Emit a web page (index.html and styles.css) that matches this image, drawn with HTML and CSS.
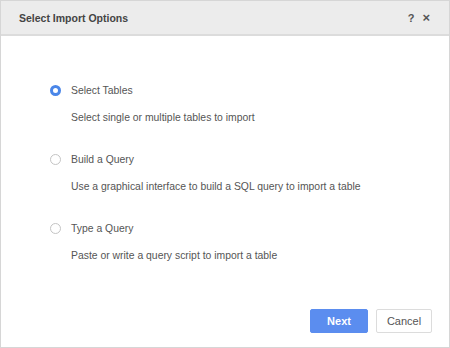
FILE: index.html
```html
<!DOCTYPE html>
<html lang="en">
<head>
    <meta charset="UTF-8">
    <title>Select Import Options</title>
    <link rel="stylesheet" href="styles.css">
</head>
<body>
    <div class="dialog">
        <div class="dialog-header">
            <span class="dialog-title">Select Import Options</span>
            <span class="header-tools">
                <span class="tool">?</span>
                <span class="tool close">&times;</span>
            </span>
        </div>

        <div class="dialog-body">
            <div class="option">
                <div class="option-row">
                    <span class="radio checked"></span>
                    <span class="option-label">Select Tables</span>
                </div>
                <div class="option-desc">Select single or multiple tables to import</div>
            </div>
            <div class="option">
                <div class="option-row">
                    <span class="radio"></span>
                    <span class="option-label">Build a Query</span>
                </div>
                <div class="option-desc">Use a graphical interface to build a SQL query to import a table</div>
            </div>
            <div class="option">
                <div class="option-row">
                    <span class="radio"></span>
                    <span class="option-label">Type a Query</span>
                </div>
                <div class="option-desc">Paste or write a query script to import a table</div>
            </div>
        </div>

        <div class="dialog-footer">
            <button class="btn primary">Next</button>
            <button class="btn">Cancel</button>
        </div>
    </div>
</body>
</html>
```

FILE: styles.css
```css
body {
    margin: 0;
    font-family: 'Liberation Sans', Arial, sans-serif;
    background: white;
}
.dialog {
    width: 450px;
    height: 348px;
    box-sizing: border-box;
    border: 1px solid #d6d6d6;
    display: flex;
    flex-direction: column;
}
.dialog-header {
    height: 33px;
    background: #ececec;
    border-bottom: 2px solid #dcdcdc;
    display: flex;
    align-items: center;
    justify-content: space-between;
    padding: 0 19px 0 18px;
}
.dialog-title {
    font-size: 10.5px;
    font-weight: bold;
    color: #444;
}
.header-tools {
    display: flex;
    gap: 8px;
}
.tool {
    font-size: 11px;
    font-weight: bold;
    color: #555;
}
.close {
    font-size: 13px;
    line-height: 11px;
}
.dialog-body {
    flex: 1;
    padding: 47px 0 0 49px;
}
.option {
    margin-bottom: 27px;
}
.option-row {
    display: flex;
    align-items: center;
    height: 14px;
}
.radio {
    width: 11px;
    height: 11px;
    box-sizing: border-box;
    border: 1px solid #c4c4c4;
    border-radius: 50%;
    margin-right: 10px;
}
.radio.checked {
    border: 3px solid #4a86e8;
}
.option-label,
.option-desc {
    font-size: 10.4px;
    color: #555;
}
.option-desc {
    line-height: 14px;
    margin: 14px 0 0 21px;
}
.dialog-footer {
    display: flex;
    justify-content: flex-end;
    gap: 8px;
    padding: 0 17px 14px 0;
}
.btn {
    height: 24px;
    width: 56px;
    font-family: inherit;
    font-size: 11px;
    color: #555;
    background: white;
    border: 1px solid #dcdcdc;
    border-radius: 2px;
    padding: 0;
}
.btn.primary {
    width: 58px;
    background: #5b8def;
    border-color: #5b8def;
    color: white;
    font-weight: bold;
}
```
